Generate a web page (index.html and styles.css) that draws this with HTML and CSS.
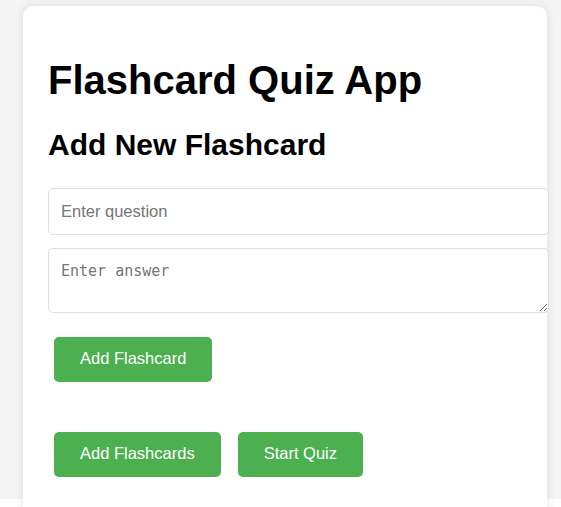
FILE: index.html
```html
<!DOCTYPE html>
<html lang="en">
<head>
<meta charset="utf-8">
<title>Flashcard Quiz App</title>
<link rel="stylesheet" href="styles.css">
</head>
<body>
<div class="page">
  <div class="card">
    <h1 class="title">Flashcard Quiz App</h1>
    <h2 class="subtitle">Add New Flashcard</h2>
    <input class="field" type="text" placeholder="Enter question">
    <textarea class="field area" placeholder="Enter answer"></textarea>
    <div class="row row-add">
      <button class="btn">Add Flashcard</button>
    </div>
    <div class="row row-actions">
      <button class="btn">Add Flashcards</button>
      <button class="btn">Start Quiz</button>
    </div>
  </div>
</div>
</body>
</html>
```
FILE: styles.css
```css
html, body {
  margin: 0;
  padding: 0;
  background: #ffffff;
  overflow: hidden;
  height: 507px;
}

body {
  font-family: "Liberation Sans", Arial, sans-serif;
  color: #000;
}

.page {
  background: #f4f4f4;
  height: 499px;
  box-sizing: border-box;
  padding: 6px 14px 0 23px;
}

.card {
  background: #fff;
  border-radius: 10px;
  box-shadow: 0 0 10px rgba(0, 0, 0, 0.1);
  padding: 25px 25px 50px;
  display: flex;
  flex-direction: column;
  align-items: flex-start;
}

.title {
  font-size: 40px;
  line-height: 46px;
  font-weight: bold;
  margin: 26px 0 25px;
}

.subtitle {
  font-size: 30px;
  line-height: 34px;
  font-weight: bold;
  margin: 0 0 26px;
}

.field {
  width: 100%;
  padding: 13px 13px 13px 12px;
  border: 1px solid #ddd;
  border-radius: 5px;
  font-family: "Liberation Sans", Arial, sans-serif;
  font-size: 16.5px;
  line-height: 19px;
  margin: 0;
  color: #000;
  background: #fff;
  outline: none;
}

.field::placeholder {
  color: #757575;
}

.area {
  margin-top: 13px;
  height: 39px;
  padding: 14px 13px 10px 12px;
  font-family: "DejaVu Sans Mono", monospace;
  font-size: 15px;
  line-height: 17px;
  resize: vertical;
}

.row {
  display: flex;
  gap: 17px;
  padding-left: 6px;
}

.row-add {
  margin-top: 24px;
}

.row-actions {
  margin-top: 50px;
}

.btn {
  background: #4CAF50;
  color: #fff;
  border: none;
  border-radius: 5px;
  padding: 12px 26px 15px;
  font-family: "Liberation Sans", Arial, sans-serif;
  font-size: 16.5px;
  line-height: 18px;
  cursor: pointer;
}
```
